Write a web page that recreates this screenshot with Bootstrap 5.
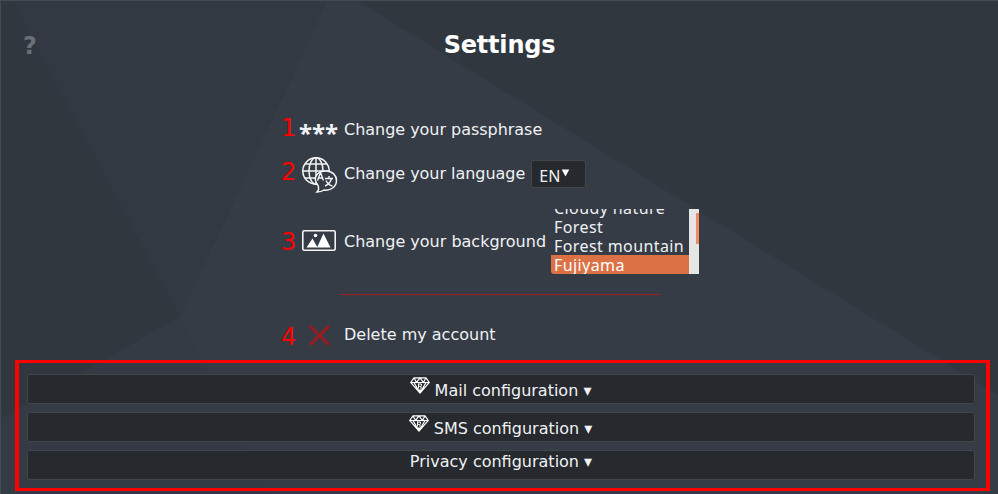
<!DOCTYPE html>
<html lang="en">
<head>
<meta charset="utf-8">
<meta name="viewport" content="width=device-width, initial-scale=1">
<title>Settings</title>
<link href="https://cdn.jsdelivr.net/npm/bootstrap@5.3.0/dist/css/bootstrap.min.css" rel="stylesheet">
<style>
body{font:16px/24px "DejaVu Sans",sans-serif;color:#f0f1f4;background:#30373f}
.page{height:494px;border:solid #444b53;border-width:1px 0 0 1px}
.backdrop{left:-1px;top:-1px;width:998px;height:494px}
.top-bar{height:105px;padding:28px 22px 0}
.help{width:60px;font-size:24px;line-height:34px;color:#6a6f77}
.title{font-size:24px;letter-spacing:-.2px;line-height:32px;color:#fff}
.setting{padding-left:280px}
.label-text{letter-spacing:-.03px}
.num{width:17px;font-size:24px;line-height:28px;color:#f00}
.ico{width:40px;margin-right:6px}
.stars{font:bold 24px/28px "Noto Sans",sans-serif;height:24px;padding:1px 0 0 1px}
.dark-box{background:#26292d;border:1px solid #42464b;border-radius:3px;color:#f0f1f4}
.lang{width:55px;height:28px;padding:3px 0 0 7px;margin-left:6px;font-family:"Noto Sans",sans-serif}
.arrow{margin:5px 0 0 1px}
.choices{width:148px;height:65px;margin-left:5px}
.options{font:16px/18px "Noto Sans",sans-serif;letter-spacing:.4px;margin-top:-11px}
.options div{padding:1px 0 0 3px;height:19px;white-space:nowrap}
.options .chosen{background:#dc7146;color:#fff;border-bottom-left-radius:3px}
.track{width:10px;background:#e6e6e6;padding-top:4px}
.thumb{width:3px;height:31px;background:#f08b61}
.rule{width:320px;margin:5px 0 0 339px;border:0;border-top:1px solid #a01d22;opacity:1}
.framed{margin:0 8px 0 14px;height:131px;border:solid #f00;border-width:3px 4px;padding:11px 11px 0 8px;gap:8px}
.config{height:30px;padding-top:4px}
.config-plain{padding-top:0;line-height:22px}
.gem{margin:-2px 5px 0 -1px}
</style>
<script src="https://cdn.jsdelivr.net/npm/bootstrap@5.3.0/dist/js/bootstrap.bundle.min.js"></script>
</head>
<body>
<svg width="0" height="0" class="position-absolute"><defs>
<symbol id="gem" viewBox="0 0 20 17"><path d="M4 .8h12L19.3 5.500 10 16 .7 5.500zM.7 5.500h18.6M4 .8 6.500 5.500 10 .8 13.500 5.500 16 .8M4 5.500l6 10.500 6-10.500" fill="none" stroke="#fff" stroke-width="1.2"/><path d="M8.500 6.500v5M8 7h3.500v1.700M8.500 9.300h2.500v2.700" fill="none" stroke="#fff"/><path d="m7 12.500 3 3.500 3-3.500z" fill="#fff"/></symbol>
</defs></svg>
<main class="page position-relative overflow-hidden">
<svg class="backdrop position-absolute" viewBox="0 0 998 494">
<path d="M12 0H328L180 317z" fill="#323943"/>
<path d="M328 0H356L998 395V494H268L180 317z" fill="#353c45"/>
<path d="M180 317 0 419V494H268z" fill="#343b45"/>
</svg>
<div class="position-relative">
<header class="top-bar d-flex justify-content-between">
<div class="help fw-bold">?</div><h1 class="title fw-bold m-0">Settings</h1><div class="help"></div>
</header>
<div class="setting d-flex align-items-center" style="height:48px"><span class="num pb-1">1</span><span class="ico stars">***</span><span class="label-text">Change your passphrase</span></div>
<div class="setting d-flex align-items-center" style="height:40px"><span class="num pb-1">2</span>
<svg class="ico" height="40" viewBox="0 0 40 40" fill="none" stroke="#f4f4f4" stroke-width="1.500">
<circle cx="18" cy="17" r="13.200"/><ellipse cx="18" cy="17" rx="7" ry="13.200"/><path d="M18 3.500v27M4.500 17h27M7 10h22M7 24h22"/>
<path d="M20 31.500c-6-7.500-1-14.500 8-14.500 6.500 0 10.500 4.500 10.500 9.500 0 7-7 10.500-12.500 9.500-2 1.500-4 2-7 2 1.500-1.500 2.500-3 1-6.500z" fill="#353c45"/>
<path d="m19.500 26.500 3-8 3 8M20.500 24h4M27 24.500h8M31 22v2.500M33.500 24.500c-1 4-3 6-6.500 7.500M28 26.500c1.500 3 3.500 5 6.500 5.500" stroke-width="1.400"/></svg>
<span class="label-text">Change your language</span><span class="lang dark-box d-flex"><span>EN</span><svg width="9" height="8" class="arrow" viewBox="0 0 9 8"><path d="M.7.500h7.600L4.500 7.500z" fill="#fff"/></svg></span></div>
<div class="setting d-flex align-items-center" style="height:95px"><span class="num">3</span>
<svg class="ico mb-1" height="24" viewBox="0 0 40 24"><rect x="4.800" y="2.800" width="32.400" height="19.400" rx="1.500" fill="none" stroke="#f4f4f4" stroke-width="1.600"/><path d="M8.500 19.500 14.500 10.500 19.500 19.500zM19 19.500 25.500 5.500 32.500 19.500z" fill="#fff"/><circle cx="17.500" cy="7.500" r="1.800" fill="#fff"/></svg>
<span>Change your background</span>
<div class="choices d-flex overflow-hidden"><div class="options flex-grow-1"><div>Cloudy nature</div><div>Forest</div><div>Forest mountain</div><div class="chosen">Fujiyama</div></div><div class="track d-flex justify-content-end"><div class="thumb"></div></div></div></div>
<hr class="rule">
<div class="setting d-flex align-items-center" style="height:65px;padding-top:14px"><span class="num pt-1">4</span><svg class="ico" height="24" viewBox="0 0 40 24"><path d="m12 3 19 19M31 3l-19 19" stroke="#9b1c20" stroke-width="3"/></svg><span>Delete my account</span></div>
<section class="framed d-flex flex-column">
<div class="config dark-box d-flex justify-content-center"><svg width="20" height="17" class="gem"><use href="#gem"/></svg><span>Mail configuration ▾</span></div>
<div class="config dark-box d-flex justify-content-center"><svg width="20" height="17" class="gem"><use href="#gem"/></svg><span>SMS configuration ▾</span></div>
<div class="config config-plain dark-box text-center">Privacy configuration ▾</div>
</section>
</div></main>
</body></html>
